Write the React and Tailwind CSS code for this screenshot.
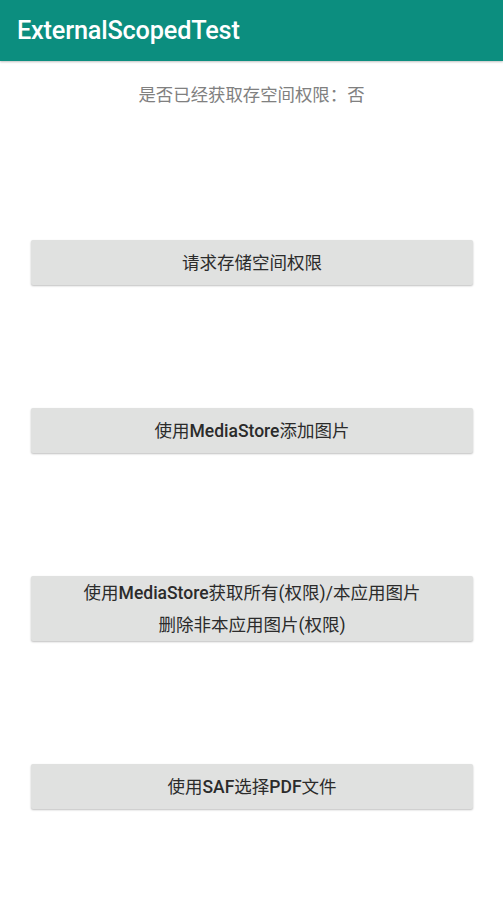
import React from 'react'

const font = { fontFamily: 'Roboto, "Noto Sans CJK SC", sans-serif' }

function Btn({ children, h = 'h-[45px]' }) {
  return (
    <div className={`ml-[31px] mr-[30px] ${h} bg-[#e0e1e0] rounded-[2px] shadow-[0_1px_2px_rgba(0,0,0,0.25)] flex flex-col items-center justify-center text-[17.5px] leading-[32px] text-[#2b2b2b]`}>
      {children}
    </div>
  )
}

export default function App() {
  return (
    <div className="w-[503px] h-[918px] bg-white overflow-hidden" style={font}>
      <div className="h-[61px] bg-[#0c8e7f] flex items-center pl-[17px] shadow-[0_1px_2px_rgba(0,0,0,0.25)]">
        <span className="text-white text-[25.3px] font-medium tracking-[-0.2px]">ExternalScopedTest</span>
      </div>
      <div className="pt-[22px] text-center text-[17.4px] leading-[24px] text-[#808080]">是否已经获取存空间权限：否</div>
      <div className="mt-[133px]">
        <Btn>请求存储空间权限</Btn>
      </div>
      <div className="mt-[123px]">
        <Btn><div>使用<span className="font-medium">MediaStore</span>添加图片</div></Btn>
      </div>
      <div className="mt-[123px]">
        <Btn h="h-[65px]">
          <div>使用<span className="font-medium">MediaStore</span>获取所有(权限)/本应用图片</div>
          <div>删除非本应用图片(权限)</div>
        </Btn>
      </div>
      <div className="mt-[123px]">
        <Btn><div>使用<span className="font-medium">SAF</span>选择<span className="font-medium">PDF</span>文件</div></Btn>
      </div>
    </div>
  )
}
